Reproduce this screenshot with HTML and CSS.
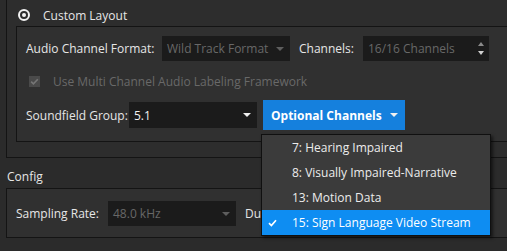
FILE: index.html
```html
<!DOCTYPE html>
<html lang="en">

<head>
    <meta charset="UTF-8" />
    <title>Audio Layout</title>
    <link rel="stylesheet" href="styles.css">
</head>

<body>
    <div class="screen">
        <div class="group">
            <div class="radio-row">
                <span class="radio"></span>
                <span class="text">Custom Layout</span>
            </div>

            <div class="frame inner">
                <div class="row row-format">
                    <span class="label label-format">Audio Channel Format:</span>
                    <div class="combo disabled">
                        <span>Wild Track Format</span>
                        <i class="caret"></i>
                    </div>
                    <span class="label label-channels">Channels:</span>
                    <div class="spin disabled">
                        <span>16/16 Channels</span>
                        <span class="spin-btns"><i class="up"></i><i class="down"></i></span>
                    </div>
                </div>

                <div class="row row-check">
                    <span class="check">
                        <svg width="11" height="11" viewBox="0 0 11 11">
                            <path d="M2.2 5.6 L4.4 7.8 L8.8 3.2" fill="none" stroke="#767676" stroke-width="1.6" />
                        </svg>
                    </span>
                    <span class="dim">Use Multi Channel Audio Labeling Framework</span>
                </div>

                <div class="row row-sound">
                    <span class="label label-sound">Soundfield Group:</span>
                    <div class="combo">
                        <span>5.1</span>
                        <i class="caret"></i>
                    </div>
                    <button class="opt-btn">Optional Channels <i class="caret"></i></button>
                </div>
            </div>
        </div>

        <div class="section-title">Config</div>

        <div class="frame config">
            <div class="row">
                <span class="label label-rate">Sampling Rate:</span>
                <div class="combo disabled">
                    <span>48.0 kHz</span>
                    <i class="caret"></i>
                </div>
                <span class="label label-du">Duration:</span>
            </div>
        </div>

        <ul class="menu">
            <li>7: Hearing Impaired</li>
            <li>8: Visually Impaired-Narrative</li>
            <li>13: Motion Data</li>
            <li class="selected">
                <svg class="tick" width="9" height="8" viewBox="0 0 9 8">
                    <path d="M1 4.2 L3.4 6.5 L8 1.2" fill="none" stroke="#ffffff" stroke-width="1.7" />
                </svg>
                15: Sign Language Video Stream
            </li>
        </ul>
    </div>
</body>

</html>
```

FILE: styles.css
```css
body {
    margin: 0;
    background: #2b2b2b;
    font-family: "Open Sans", "Noto Sans", sans-serif;
    font-size: 12px;
    color: #e6e6e6;
    overflow: hidden;
}

.screen {
    position: relative;
    width: 507px;
    height: 251px;
    overflow: hidden;
}

.group {
    margin-left: 6px;
    width: 540px;
    border: 1px solid #141414;
    border-top: none;
    padding-bottom: 15px;
    background: #2d2d2d;
}

.radio-row {
    display: flex;
    align-items: center;
    height: 22px;
    padding-top: 4px;
    padding-left: 11px;
}

.radio {
    width: 8px;
    height: 8px;
    border: 2px solid #f2f2f2;
    border-radius: 50%;
    display: flex;
    align-items: center;
    justify-content: center;
}

.radio::after {
    content: "";
    width: 4px;
    height: 4px;
    border-radius: 50%;
    background: #f2f2f2;
}

.radio-row .text {
    margin-left: 13px;
}

.frame {
    border: 1px solid #141414;
    background: #303030;
}

.inner {
    margin-left: 9px;
    padding: 9px 0 11px 9px;
}

.row {
    display: flex;
    align-items: center;
    height: 25px;
}

.label {
    white-space: nowrap;
}

.label-format {
    width: 136px;
}

.label-channels {
    width: 64px;
    margin-left: 9px;
}

.label-sound {
    width: 103px;
}

.label-rate {
    width: 92px;
}

.label-du {
    margin-left: 9px;
}

.combo,
.spin {
    height: 25px;
    background: #1b1b1b;
    display: flex;
    align-items: center;
    justify-content: space-between;
    padding: 0 6px 0 5px;
    box-sizing: border-box;
    white-space: nowrap;
}

.combo {
    width: 128px;
}

.spin {
    width: 126px;
}

.disabled {
    color: #686868;
}

.caret {
    display: block;
    width: 0;
    height: 0;
    border-left: 4px solid transparent;
    border-right: 4px solid transparent;
    border-top: 4px solid #f0f0f0;
}

.disabled .caret {
    border-top-color: #5e5e5e;
}

.spin-btns {
    display: flex;
    flex-direction: column;
    gap: 5px;
    margin-right: -1px;
}

.spin-btns i {
    display: block;
    width: 0;
    height: 0;
    border-left: 3px solid transparent;
    border-right: 3px solid transparent;
}

.spin-btns .up {
    border-bottom: 4px solid #8a8a8a;
}

.spin-btns .down {
    border-top: 4px solid #d0d0d0;
}

.row-check {
    margin-top: 8px;
    height: 24px;
    padding-left: 3px;
}

.check {
    width: 11px;
    height: 11px;
    background: #4a4a4a;
    display: flex;
}

.dim {
    margin-left: 13px;
    color: #696969;
}

.row-sound {
    margin-top: 7px;
    height: 30px;
}

.row-sound .combo {
    height: 26px;
    color: #f2f2f2;
}

.opt-btn {
    margin-left: 6px;
    width: 142px;
    height: 30px;
    border: none;
    background: #1580dd;
    color: #ffffff;
    font-family: "Open Sans", "Noto Sans", sans-serif;
    font-weight: bold;
    font-size: 12px;
    display: flex;
    align-items: center;
    justify-content: space-between;
    padding: 0 7px 0 8px;
}

.section-title {
    height: 22px;
    line-height: 22px;
    padding: 8px 0 0 7px;
}

.config {
    margin-left: 6px;
    width: 540px;
    padding: 12px 0 11px 9px;
    border-color: #141414;
}

.menu {
    position: absolute;
    left: 261px;
    top: 134px;
    width: 228px;
    margin: 0;
    padding: 0;
    list-style: none;
    background: #3b3b3b;
    border: 1px solid #101010;
    box-shadow: 2px 2px 3px rgba(0, 0, 0, 0.55);
}

.menu li {
    position: relative;
    height: 25px;
    line-height: 25px;
    padding-left: 30px;
    color: #ececec;
    white-space: nowrap;
}

.menu li.selected {
    background: #0e8df2;
    color: #ffffff;
}

.tick {
    position: absolute;
    left: 6px;
    top: 9px;
}
```
